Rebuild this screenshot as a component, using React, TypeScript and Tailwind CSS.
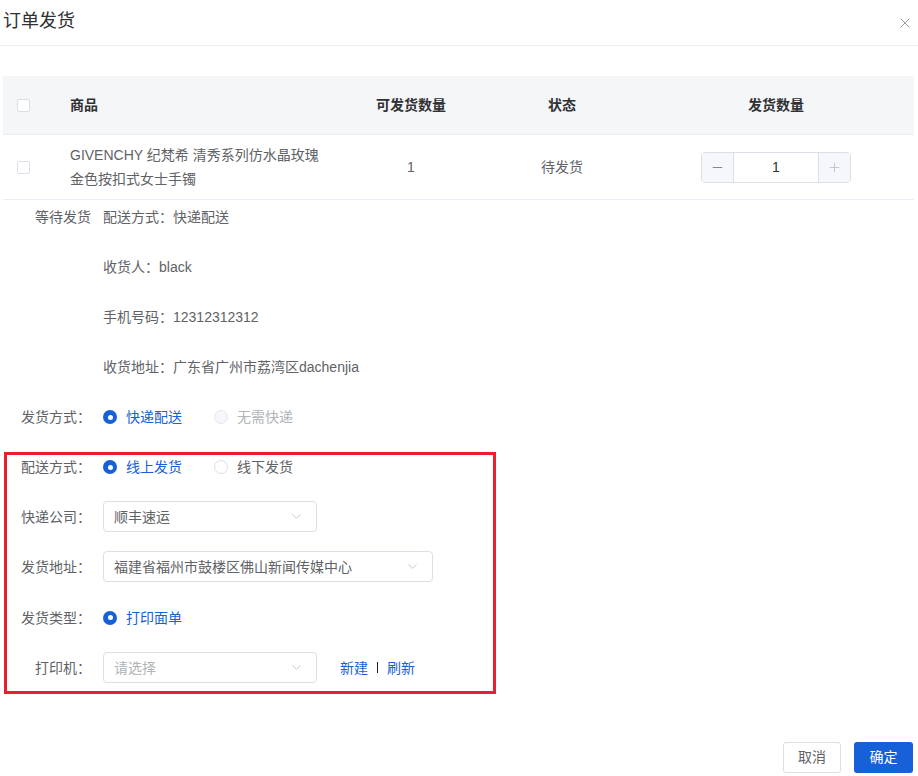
import { ChevronDown, X, Minus, Plus } from 'lucide-react';

const FONT = { fontFamily: '"Liberation Sans", "Noto Sans CJK SC", sans-serif' };

function Checkbox() {
  return <span className="block w-[13px] h-[13px] border border-[#dcdfe6] rounded-[2px] bg-white" />;
}

function Radio({ label, checked, disabled }: { label: string; checked?: boolean; disabled?: boolean }) {
  return (
    <label className="flex items-center gap-[9px] h-5">
      {checked ? (
        <span className="w-[14px] h-[14px] rounded-full bg-[#1660d8] flex items-center justify-center">
          <span className="w-[5px] h-[5px] rounded-full bg-white" />
        </span>
      ) : (
        <span
          className={`w-[14px] h-[14px] rounded-full border ${
            disabled ? 'border-[#e4e7ed] bg-[#f5f7fa]' : 'border-[#dcdfe6] bg-white'
          }`}
        />
      )}
      <span className={checked ? 'text-[#1660d8]' : disabled ? 'text-[#b0b3b8]' : 'text-[#606266]'}>{label}</span>
    </label>
  );
}

function Select({ value, width, placeholder }: { value: string; width: string; placeholder?: boolean }) {
  return (
    <div
      className={`${width} h-[31px] border border-[#dcdfe6] rounded-[4px] flex items-center justify-between pl-[10px] pr-[12px]`}
    >
      <span className={placeholder ? 'text-[#b0b3b8]' : 'text-[#606266]'}>{value}</span>
      <ChevronDown size={15} strokeWidth={1.2} className="text-[#b4b7bd]" />
    </div>
  );
}

function Line({ label, children, labelWidth = 'w-[91px]' }: { label: string; children: React.ReactNode; labelWidth?: string }) {
  return (
    <div className="flex items-center">
      <div className={`${labelWidth} text-right shrink-0`}>{label}</div>
      <div className="pl-[12px] flex items-center">{children}</div>
    </div>
  );
}

export default function App() {
  return (
    <div className="w-[918px] h-[776px] bg-white text-[14px] text-[#606266] overflow-hidden" style={FONT}>
      {/* Header */}
      <div className="h-[46px] border-b border-[#ebeef5] flex items-center justify-between pl-[3px] pr-[5px]">
        <h1 className="text-[18px] text-[#303133] font-normal pb-[2px]">订单发货</h1>
        <X size={16} strokeWidth={1.4} className="text-[#909399]" />
      </div>

      {/* Table */}
      <div className="ml-[3px] mt-[30px] w-[911px]">
        <div className="grid grid-cols-[67px_266px_150px_152px_276px] h-[59px] bg-[#f5f6f8] border-b border-[#ebeef5] items-center font-bold text-[#303133]">
          <div className="pl-[14px]"><Checkbox /></div>
          <div>商品</div>
          <div className="text-center">可发货数量</div>
          <div className="text-center">状态</div>
          <div className="text-center">发货数量</div>
        </div>
        <div className="grid grid-cols-[67px_266px_150px_152px_276px] h-[65px] border-b border-[#ebeef5] items-center">
          <div className="pl-[14px]"><Checkbox /></div>
          <div className="leading-[24px]">
            GIVENCHY 纪梵希 清秀系列仿水晶玫瑰
            <br />
            金色按扣式女士手镯
          </div>
          <div className="text-center">1</div>
          <div className="text-center">待发货</div>
          <div className="flex justify-center">
            <div className="w-[150px] h-[31px] border border-[#dcdfe6] rounded-[4px] flex overflow-hidden">
              <div className="w-[32px] bg-[#f5f7fa] border-r border-[#dcdfe6] flex items-center justify-center">
                <Minus size={15} strokeWidth={1.2} className="text-[#606266]" />
              </div>
              <div className="flex-1 flex items-center justify-center text-[#303133]">1</div>
              <div className="w-[32px] bg-[#f5f7fa] border-l border-[#dcdfe6] flex items-center justify-center">
                <Plus size={15} strokeWidth={1.2} className="text-[#b4b7bd]" />
              </div>
            </div>
          </div>
        </div>
      </div>

      {/* Details */}
      <div className="pt-[7px] flex flex-col gap-[30px] leading-5">
        <Line label="等待发货">配送方式：快递配送</Line>
        <Line label="">收货人：black</Line>
        <Line label="">手机号码：12312312312</Line>
        <Line label="">收货地址：广东省广州市荔湾区dachenjia</Line>
        <Line label="发货方式：">
          <div className="flex gap-[32px]">
            <Radio label="快递配送" checked />
            <Radio label="无需快递" disabled />
          </div>
        </Line>
      </div>

      {/* Delivery form */}
      <div className="ml-[4px] mt-[25px] w-[492px] border-[3px] border-[#e8202a] pb-[8px] flex flex-col leading-5">
        <div className="h-[24px] flex items-center">
          <Line label="配送方式：" labelWidth="w-[84px]">
            <div className="flex gap-[32px]">
              <Radio label="线上发货" checked />
              <Radio label="线下发货" />
            </div>
          </Line>
        </div>
        <div className="mt-[22px]">
          <Line label="快递公司：" labelWidth="w-[84px]">
            <Select value="顺丰速运" width="w-[214px]" />
          </Line>
        </div>
        <div className="mt-[19px]">
          <Line label="发货地址：" labelWidth="w-[84px]">
            <Select value="福建省福州市鼓楼区佛山新闻传媒中心" width="w-[330px]" />
          </Line>
        </div>
        <div className="mt-[20px] h-[31px] flex items-center">
          <Line label="发货类型：" labelWidth="w-[84px]">
            <Radio label="打印面单" checked />
          </Line>
        </div>
        <div className="mt-[19px]">
          <Line label="打印机：" labelWidth="w-[84px]">
            <Select value="请选择" width="w-[214px]" placeholder />
            <div className="ml-[23px] flex items-center gap-[9px] text-[#1660d8]">
              <span>新建</span>
              <span className="w-[1px] h-[11px] bg-[#1f1f1f]" />
              <span>刷新</span>
            </div>
          </Line>
        </div>
      </div>

      {/* Footer */}
      <div className="mt-[48px] pr-[5px] flex justify-end gap-[13px]">
        <button className="w-[58px] h-[31px] border border-[#dcdfe6] rounded-[3px] bg-white text-[#606266]">取消</button>
        <button className="w-[59px] h-[31px] rounded-[3px] bg-[#1660d8] text-white">确定</button>
      </div>
    </div>
  );
}
